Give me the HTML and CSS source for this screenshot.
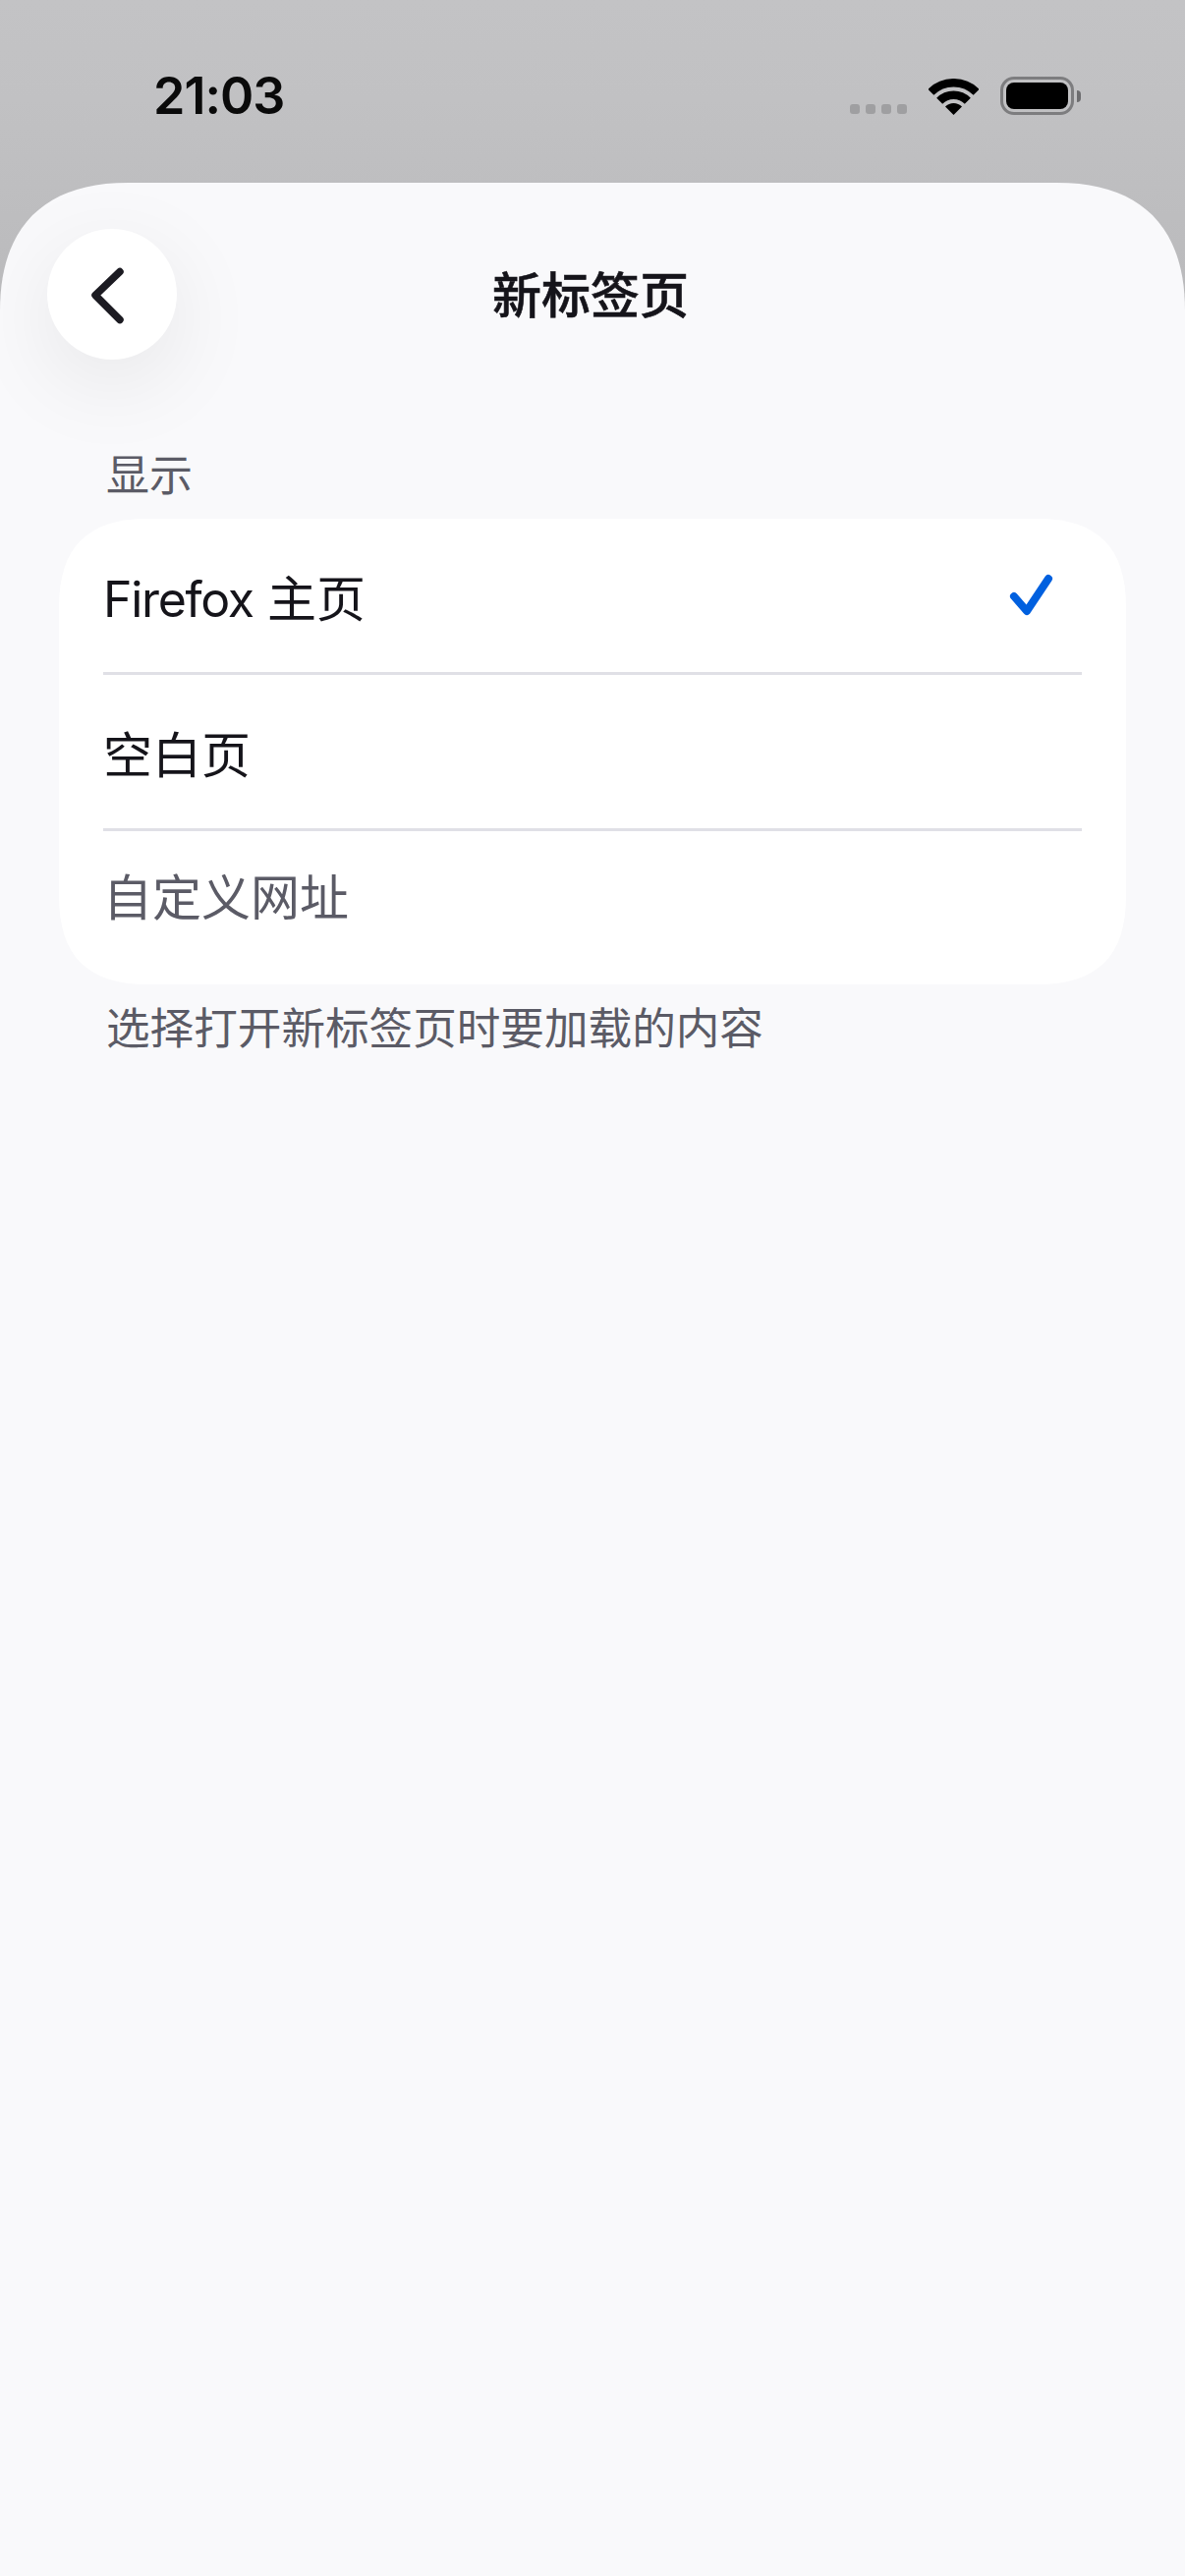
FILE: index.html
```html
<!DOCTYPE html>
<html lang="zh-CN">
<head>
    <meta charset="UTF-8">
    <meta name="viewport" content="width=device-width, initial-scale=1.0">
    <title>新标签页</title>
    <link rel="stylesheet" href="styles.css">
</head>
<body>

    <div class="status-bar">
        <span class="time">21:03</span>
        <div class="status-icons">
            <div class="signal-dots"><i></i><i></i><i></i><i></i></div>
            <svg class="wifi" width="51" height="37" viewBox="0 0 51 37">
                <path d="M2.34 13.84A32.75 32.75 0 0 1 48.66 13.84" fill="none" stroke="#000" stroke-width="8.5"/>
                <path d="M11.18 22.68A20.25 20.25 0 0 1 39.82 22.68" fill="none" stroke="#000" stroke-width="8.5"/>
                <path d="M25.5 37L17 28.5A12 12 0 0 1 34 28.5Z" fill="#000"/>
            </svg>
            <div class="battery">
                <div class="battery-body"><div class="battery-level"></div></div>
                <div class="battery-nub"></div>
            </div>
        </div>
    </div>

    <div class="sheet">
        <div class="nav">
            <button class="back-btn" type="button" aria-label="返回">
                <svg width="40" height="64" viewBox="0 0 40 64">
                    <path d="M33 8.5L8 32.5L33 57.5" fill="none" stroke="#1c1b22" stroke-width="7.5" stroke-linecap="round" stroke-linejoin="round"/>
                </svg>
            </button>
            <h1>新标签页</h1>
        </div>

        <div class="section-label">显示</div>
        <div class="card">
            <div class="row">
                <div class="row-inner">
                    <span><span class="latin">Firefox</span> 主页</span>
                    <svg class="check" width="58" height="56" viewBox="0 0 58 56">
                        <path d="M10 28L23 43L45 10" fill="none" stroke="#0060df" stroke-width="8" stroke-linecap="round" stroke-linejoin="round"/>
                    </svg>
                </div>
            </div>
            <div class="row">
                <div class="row-inner"><span>空白页</span></div>
            </div>
            <div class="row last">
                <div class="row-inner"><span class="muted">自定义网址</span></div>
            </div>
        </div>
        <div class="section-note">选择打开新标签页时要加载的内容</div>
    </div>

</body>
</html>
```

FILE: styles.css
```css
* {
    margin: 0;
    padding: 0;
    box-sizing: border-box;
}

body {
    width: 1206px;
    height: 2622px;
    display: flex;
    flex-direction: column;
    overflow: hidden;
    background: linear-gradient(180deg, #c3c3c5 0%, #c1c1c3 100px, #b9b9bb 340px);
    font-family: "Inter", "Noto Sans CJK SC", sans-serif;
    color: #15141a;
}

/* Status bar */
.status-bar {
    height: 186px;
    flex-shrink: 0;
    display: flex;
    justify-content: space-between;
    align-items: flex-start;
    padding: 66px 106px 0 156px;
}

.time {
    font-size: 52px;
    line-height: 64px;
    font-weight: 600;
    letter-spacing: -1px;
    color: #0a0a0a;
}

.status-icons {
    display: flex;
    align-items: flex-end;
    margin-top: 12px;
}

.signal-dots {
    display: flex;
    gap: 6px;
    margin-right: 22px;
    margin-bottom: 1px;
}

.signal-dots i {
    width: 10px;
    height: 10px;
    border-radius: 3px;
    background-color: #9f9fa1;
}

.wifi {
    margin-right: 22px;
}

.battery {
    display: flex;
    align-items: center;
}

.battery-body {
    width: 75px;
    height: 39px;
    padding: 3px;
    border: 3px solid #7d7d7f;
    border-radius: 14px;
}

.battery-level {
    width: 100%;
    height: 100%;
    background-color: #000;
    border-radius: 8px;
}

.battery-nub {
    width: 4px;
    height: 12px;
    margin-left: 3px;
    background-color: #6d6d6f;
    border-radius: 0 6px 6px 0;
}

/* Sheet, its top corners are not round arcs so they get a clip */
.sheet {
    flex: 1;
    position: relative;
    overflow: hidden;
    background-color: #f9f9fb;
    clip-path: path("M0 130C0 45 45 0 130 0H1076C1161 0 1206 45 1206 130V2436H0Z");
}

.nav {
    display: flex;
    align-items: center;
    justify-content: center;
    position: relative;
    height: 133px;
    margin-top: 47px;
}

.back-btn {
    position: absolute;
    left: 48px;
    top: 0;
    width: 132px;
    height: 133px;
    border: none;
    border-radius: 50%;
    background-color: #fff;
    box-shadow: 0 24px 90px rgba(0, 0, 0, 0.08);
    display: flex;
    align-items: center;
    justify-content: center;
}

.back-btn svg {
    margin-right: 10px;
}

.nav h1 {
    margin: 2px 4px 0 0;
    font-size: 50px;
    font-weight: 500;
    line-height: 64px;
    color: #15141a;
    -webkit-text-stroke: 0.6px #15141a;
}

.section-label {
    margin: 87px 0 0 108px;
    font-size: 44px;
    line-height: 62px;
    color: #5b5b66;
}

/* same corner shape as the sheet, smaller */
.card {
    margin: 13px 60px 0;
    background-color: #fff;
    clip-path: path("M0 90C0 29 29 0 90 0H996C1057 0 1086 29 1086 90V384C1086 445 1057 474 996 474H90C29 474 0 445 0 384Z");
}

.row {
    height: 159px;
    padding: 0 45px;
    font-size: 50px;
}

.row.last {
    height: 156px;
}

.row-inner {
    height: 100%;
    display: flex;
    align-items: center;
    justify-content: space-between;
    border-bottom: 3px solid #e0e0e6;
}

.row.last .row-inner {
    padding-bottom: 28px;
    border-bottom: none;
}

.latin {
    letter-spacing: -1.3px;
}

.muted {
    color: #5b5b66;
}

.check {
    margin-right: 21px;
    margin-top: 2px;
}

.section-note {
    margin: 14px 0 0 108px;
    font-size: 44.6px;
    line-height: 62px;
    color: #5b5b66;
}
```
